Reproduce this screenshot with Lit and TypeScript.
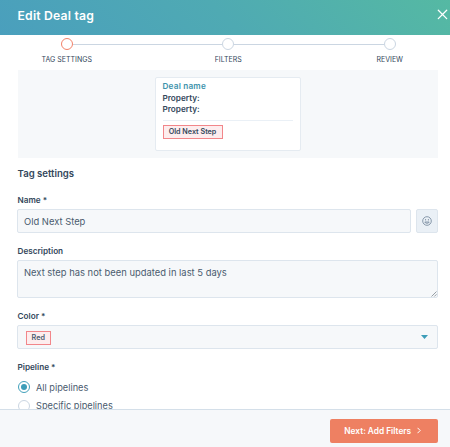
import { LitElement, html, css } from "lit";
import { customElement, state } from "lit/decorators.js";
import { classMap } from "lit/directives/class-map.js";

@customElement("app-root")
export class AppRoot extends LitElement {
  @state() private pipeline = "All pipelines";

  static styles = css`
    :host {
      display: flex;
      flex-direction: column;
      width: 450px;
      height: 447px;
      overflow: hidden;
      background: #fff;
      color: #33475b;
      font-family: Inter, "Liberation Sans", sans-serif;
      font-size: 10px;
      line-height: 14px;
      white-space: nowrap;
    }
    * { box-sizing: border-box; }
    svg { display: block; flex: none; }
    header {
      flex: none;
      height: 35px;
      padding: 0 2px 4px 17.5px;
      display: flex;
      align-items: center;
      justify-content: space-between;
      color: #fff;
      background: linear-gradient(45deg, #4a9fbd 0%, #4faab3 50%, #55b9a3 100%);
    }
    h1 { margin: 0; font-size: 12.2px; font-weight: 600; letter-spacing: 0.2px; }
    .close { margin-top: -3px; }
    .steps { flex: none; height: 35px; padding-top: 3px; display: flex; justify-content: center; margin-left: 6.5px; }
    .step { flex: none; width: 161.5px; display: flex; flex-direction: column; align-items: center; }
    .rail { width: 100%; height: 12px; display: flex; align-items: center; }
    .line { flex: 1; height: 1px; background: #cbd6e2; }
    .step:first-child .line:first-child, .step:last-child .line:last-child { background: none; }
    .dot { width: 12px; height: 12px; border: 1.5px solid #cbd6e2; border-radius: 50%; }
    .dot.active { border-color: #f2826a; }
    .label { margin-top: 3px; font-size: 7px; }
    main { flex: 1; min-height: 0; overflow: hidden; padding: 0 12px 0 17px; }
    .preview { height: 87.5px; background: #f6f8fa; padding: 7px 0 0 137px; margin-left: 0.5px; }
    .card { width: 146px; height: 74px; background: #fff; border: 1px solid #e5ebf1; border-radius: 2px; padding: 2.8px 7px 0 7px; font-size: 8.2px; font-weight: 600; line-height: 11.7px; }
    .deal { color: #3d93ac; letter-spacing: 0.2px; }
    .rule { height: 1px; background: #eaf0f6; margin: 4px 0 4.2px; }
    .tag { display: flex; align-items: center; justify-content: center; height: 14px; border: 1px solid #f2868a; background: #fdedee; font-size: 7.2px; font-weight: 600; line-height: 12px; }
    .tag.wide { width: 60px; }
    .tag.small { width: 24.5px; margin-top: 1px; }
    h2 { margin: 9px 0 0 0.5px; font-size: 9.6px; line-height: 14px; font-weight: 600; }
    .field-label { font-size: 8.2px; font-weight: 600; height: 14px; line-height: 14px; padding-left: 0.5px; }
    .name { margin-top: 12px; }
    .row { display: flex; gap: 5px; margin-top: 2.5px; }
    .box { border: 1px solid #dde5ed; border-radius: 2px; background: #f6f8fa; color: #4a5b6e; font-size: 9.4px; }
    .input { flex: 1; height: 24px; padding: 0 6px; line-height: 23px; }
    .emoji { width: 22px; height: 24px; background: #eaf0f6; display: grid; place-items: center; }
    .desc { margin-top: 10.5px; }
    .area { display: flex; justify-content: space-between; height: 38px; margin-top: 2px; padding: 5px 0 0 6px; line-height: 14px; }
    .area .text { letter-spacing: 0.01px; }
    .area svg { align-self: flex-end; }
    .color { margin-top: 11.5px; }
    .select { height: 24px; margin-top: 2px; padding: 0 9px 0 8px; display: flex; align-items: center; justify-content: space-between; }
    .pipe { margin-top: 11px; margin-bottom: 3.8px; }
    .option { display: flex; align-items: center; gap: 6.5px; height: 18.8px; padding-left: 0.5px; color: #4a5b6e; font-size: 9.2px; }
    .option span { padding-top: 1px; }
    .radio { flex: none; width: 12px; height: 12px; border: 1px solid #cbd6e2; border-radius: 50%; background: #fff; display: grid; place-items: center; }
    .radio.on { border-color: #42a1bb; }
    .radio.on::after { content: ""; width: 6px; height: 6px; border-radius: 50%; background: #3d9db8; }
    footer { flex: none; height: 38px; border-top: 1px solid #d4dfe9; background: #f6f8fa; display: flex; justify-content: flex-end; padding: 9px 12px 0 0; }
    button { width: 108.5px; height: 23.5px; border: 0; border-radius: 2px; background: #ee8062; color: #fff; font: 600 8.3px/14px Inter, sans-serif; display: flex; align-items: center; justify-content: center; gap: 6px; padding: 0 2px 0 0; }
  `;

  render() {
    return html`
      <header>
        <h1>Edit Deal tag</h1>
        <svg class="close" width="11" height="11" viewBox="0 0 11 11" fill="none" stroke="#fff" stroke-width="1.3" stroke-linecap="round"><path d="M1.3 1.2l8.4 8.4M9.7 1.2L1.3 9.6" /></svg>
      </header>
      <div class="steps">
        ${["TAG SETTINGS", "FILTERS", "REVIEW"].map(
          (s, i) => html`<div class="step">
            <div class="rail"><i class="line"></i><i class=${classMap({ dot: true, active: i === 0 })}></i><i class="line"></i></div>
            <span class="label">${s}</span>
          </div>`
        )}
      </div>
      <main>
        <div class="preview">
          <div class="card">
            <div class="deal">Deal name</div>
            <div>Property:</div>
            <div>Property:</div>
            <div class="rule"></div>
            <span class="tag wide">Old Next Step</span>
          </div>
        </div>
        <h2>Tag settings</h2>
        <div class="field-label name">Name *</div>
        <div class="row">
          <div class="box input">Old Next Step</div>
          <div class="box emoji">
            <svg width="10" height="10" viewBox="0 0 10 10" fill="none" stroke="#7c8da1" stroke-width=".9"><circle cx="5" cy="5" r="4.3" /><path d="M3.6 3v1.5M6.4 3v1.5M2.8 6h4.4c-.3 1.7-4.1 1.7-4.4 0z" /></svg>
          </div>
        </div>
        <div class="field-label desc">Description</div>
        <div class="box area">
          <span class="text">Next step has not been updated in last 5 days</span>
          <svg width="6" height="6" viewBox="0 0 6 6" stroke="#7d868f" stroke-width=".8"><path d="M.5 5.5l5-5M3.3 5.5l2.2-2.2" /></svg>
        </div>
        <div class="field-label color">Color *</div>
        <div class="box select">
          <span class="tag small">Red</span>
          <svg width="7" height="4" viewBox="0 0 7 4"><path d="M0 0h7L3.5 4z" fill="#3d9db8" /></svg>
        </div>
        <div class="field-label pipe">Pipeline *</div>
        ${["All pipelines", "Specific pipelines"].map(
          (p) => html`<div class="option" @click=${() => (this.pipeline = p)}>
            <i class=${classMap({ radio: true, on: this.pipeline === p })}></i><span>${p}</span>
          </div>`
        )}
      </main>
      <footer>
        <button>
          <span>Next: Add Filters</span>
          <svg width="4" height="7" viewBox="0 0 4 7" fill="none" stroke="#fff" stroke-width="1"><path d="M.5.8l2.7 2.7L.5 6.2" /></svg>
        </button>
      </footer>
    `;
  }
}
